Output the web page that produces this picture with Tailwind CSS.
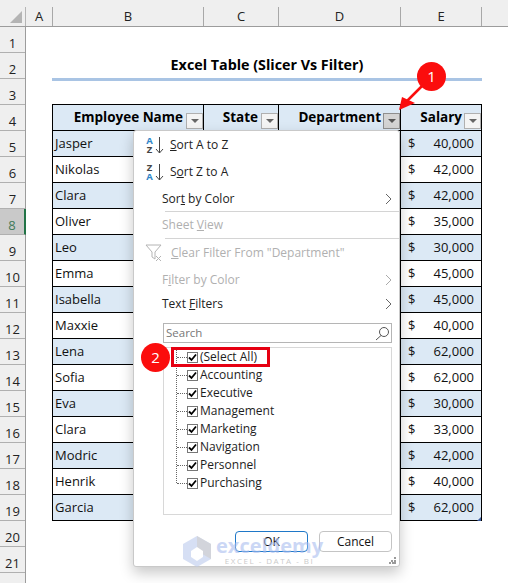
<!DOCTYPE html>
<html lang="en">
<head>
  <meta charset="UTF-8">
  <title>Excel Table (Slicer Vs Filter)</title>
  <script src="https://cdn.jsdelivr.net/npm/@tailwindcss/browser@4"></script>
</head>
<body class="bg-white font-['Open_Sans',sans-serif] text-[13px] text-[#111]">
<div class="relative w-[508px] h-[583px] overflow-hidden">

  <!-- column headers -->
  <div class="flex h-[27px] bg-[#efefef] border-b border-[#9c9c9c] text-[#222] text-[13px]">
    <div class="w-[26px] h-[19px] self-end border-r border-[#b5b5b5] flex items-end justify-end p-[3px]">
      <div class="w-0 h-0 border-l-[12px] border-l-transparent border-b-[12px] border-b-[#b4b4b4]"></div>
    </div>
    <div class="w-[27px] h-[19px] self-end border-r border-[#a8a8a8] flex items-center justify-center">A</div>
    <div class="w-[151px] h-[19px] self-end border-r border-[#a8a8a8] flex items-center justify-center">B</div>
    <div class="w-[75px] h-[19px] self-end border-r border-[#a8a8a8] flex items-center justify-center">C</div>
    <div class="w-[122px] h-[19px] self-end border-r border-[#a8a8a8] flex items-center justify-center">D</div>
    <div class="w-[81px] h-[19px] self-end border-r border-[#a8a8a8] flex items-center justify-center">E</div>
    <div class="flex-1"></div>
  </div>

  <div class="flex">
    <!-- row headers -->
    <div class="w-[26px] shrink-0 bg-[#efefef] border-r border-[#9c9c9c] text-[#222] text-[13px] leading-[18px]">
      <div class="h-[26px] border-b border-[#b0b0b0] flex items-end justify-center">1</div>
      <div class="h-[26px] border-b border-[#b0b0b0] flex items-end justify-center">2</div>
      <div class="h-[26px] border-b border-[#b0b0b0] flex items-end justify-center">3</div>
      <div class="h-[26px] border-b border-[#b0b0b0] flex items-end justify-center">4</div>
      <div class="h-[26px] border-b border-[#b0b0b0] flex items-end justify-center">5</div>
      <div class="h-[26px] border-b border-[#b0b0b0] flex items-end justify-center">6</div>
      <div class="h-[26px] border-b border-[#b0b0b0] flex items-end justify-center">7</div>
      <div class="h-[26px] border-b border-[#b0b0b0] flex items-end justify-center bg-[#c9c9c9] text-[#3f7a58] border-r-2 border-r-[#217346] -mr-px">8</div>
      <div class="h-[26px] border-b border-[#b0b0b0] flex items-end justify-center">9</div>
      <div class="h-[26px] border-b border-[#b0b0b0] flex items-end justify-center">10</div>
      <div class="h-[26px] border-b border-[#b0b0b0] flex items-end justify-center">11</div>
      <div class="h-[26px] border-b border-[#b0b0b0] flex items-end justify-center">12</div>
      <div class="h-[26px] border-b border-[#b0b0b0] flex items-end justify-center">13</div>
      <div class="h-[26px] border-b border-[#b0b0b0] flex items-end justify-center">14</div>
      <div class="h-[26px] border-b border-[#b0b0b0] flex items-end justify-center">15</div>
      <div class="h-[26px] border-b border-[#b0b0b0] flex items-end justify-center">16</div>
      <div class="h-[26px] border-b border-[#b0b0b0] flex items-end justify-center">17</div>
      <div class="h-[26px] border-b border-[#b0b0b0] flex items-end justify-center">18</div>
      <div class="h-[26px] border-b border-[#b0b0b0] flex items-end justify-center">19</div>
      <div class="h-[26px] border-b border-[#b0b0b0] flex items-end justify-center">20</div>
      <div class="h-[26px] border-b border-[#b0b0b0] flex items-end justify-center">21</div>
      <div class="h-[26px]"></div>
    </div>

    <!-- sheet -->
    <div class="pl-[26px]">
      <div class="w-[430px] h-[51px] pt-[25px] text-center font-bold text-[14.300px] leading-[26px] text-black">Excel Table (Slicer Vs Filter)</div>
      <div class="w-[430px] h-[3px] bg-[#a9c4e4]"></div>
      <div class="h-[23px]"></div>

      <div class="relative w-[430px] border-t border-l border-r border-black">
        <!-- table head -->
        <div class="flex h-[26px] bg-[#dce9f5] font-bold text-[13.5px] border-b border-black text-black">
          <div class="w-[151px] border-r border-black flex items-center justify-end gap-[3px]">Employee Name
            <span class="self-end mb-[1px] w-[17px] h-[16px] bg-[#f4f4f4] border border-[#b0b0b0] flex items-center justify-center"><span class="w-0 h-0 border-x-[4px] border-x-transparent border-t-[4px] border-t-[#666]"></span></span>
          </div>
          <div class="w-[75px] border-r border-black flex items-center justify-end gap-[3px]">State
            <span class="self-end mb-[1px] w-[17px] h-[16px] bg-[#f4f4f4] border border-[#b0b0b0] flex items-center justify-center"><span class="w-0 h-0 border-x-[4px] border-x-transparent border-t-[4px] border-t-[#666]"></span></span>
          </div>
          <div class="w-[122px] flex items-center justify-end gap-[2px] border-r border-black">Department
            <span class="self-end mb-[1px] w-[17px] h-[16px] bg-[#d4d4d4] border border-[#8f8f8f] flex items-center justify-center"><span class="w-0 h-0 border-x-[4px] border-x-transparent border-t-[4px] border-t-[#555]"></span></span>
          </div>
          <div class="flex-1 flex items-center justify-end gap-[2px]">Salary
            <span class="self-end mb-[1px] w-[17px] h-[16px] bg-[#f4f4f4] border border-[#b0b0b0] flex items-center justify-center"><span class="w-0 h-0 border-x-[4px] border-x-transparent border-t-[4px] border-t-[#666]"></span></span>
          </div>
        </div>
        <!-- table body: only name and salary show beside the menu -->
        <div class="flex h-[26px] pt-[1px] bg-[#dce9f5] border-b border-black"><div class="w-[151px] pl-[2px] flex items-center">Jasper</div><div class="w-[197px] -mt-[1px] border-r border-black"></div><div class="flex-1 flex items-center justify-between px-[7px]"><span>$</span><span>40,000</span></div></div>
        <div class="flex h-[26px] pt-[1px] border-b border-black"><div class="w-[151px] pl-[2px] flex items-center">Nikolas</div><div class="w-[197px] -mt-[1px] border-r border-black"></div><div class="flex-1 flex items-center justify-between px-[7px]"><span>$</span><span>42,000</span></div></div>
        <div class="flex h-[26px] pt-[1px] bg-[#dce9f5] border-b border-black"><div class="w-[151px] pl-[2px] flex items-center">Clara</div><div class="w-[197px] -mt-[1px] border-r border-black"></div><div class="flex-1 flex items-center justify-between px-[7px]"><span>$</span><span>42,000</span></div></div>
        <div class="flex h-[26px] pt-[1px] border-b border-black"><div class="w-[151px] pl-[2px] flex items-center">Oliver</div><div class="w-[197px] -mt-[1px] border-r border-black"></div><div class="flex-1 flex items-center justify-between px-[7px]"><span>$</span><span>35,000</span></div></div>
        <div class="flex h-[26px] pt-[1px] bg-[#dce9f5] border-b border-black"><div class="w-[151px] pl-[2px] flex items-center">Leo</div><div class="w-[197px] -mt-[1px] border-r border-black"></div><div class="flex-1 flex items-center justify-between px-[7px]"><span>$</span><span>30,000</span></div></div>
        <div class="flex h-[26px] pt-[1px] border-b border-black"><div class="w-[151px] pl-[2px] flex items-center">Emma</div><div class="w-[197px] -mt-[1px] border-r border-black"></div><div class="flex-1 flex items-center justify-between px-[7px]"><span>$</span><span>45,000</span></div></div>
        <div class="flex h-[26px] pt-[1px] bg-[#dce9f5] border-b border-black"><div class="w-[151px] pl-[2px] flex items-center">Isabella</div><div class="w-[197px] -mt-[1px] border-r border-black"></div><div class="flex-1 flex items-center justify-between px-[7px]"><span>$</span><span>45,000</span></div></div>
        <div class="flex h-[26px] pt-[1px] border-b border-black"><div class="w-[151px] pl-[2px] flex items-center">Maxxie</div><div class="w-[197px] -mt-[1px] border-r border-black"></div><div class="flex-1 flex items-center justify-between px-[7px]"><span>$</span><span>40,000</span></div></div>
        <div class="flex h-[26px] pt-[1px] bg-[#dce9f5] border-b border-black"><div class="w-[151px] pl-[2px] flex items-center">Lena</div><div class="w-[197px] -mt-[1px] border-r border-black"></div><div class="flex-1 flex items-center justify-between px-[7px]"><span>$</span><span>62,000</span></div></div>
        <div class="flex h-[26px] pt-[1px] border-b border-black"><div class="w-[151px] pl-[2px] flex items-center">Sofia</div><div class="w-[197px] -mt-[1px] border-r border-black"></div><div class="flex-1 flex items-center justify-between px-[7px]"><span>$</span><span>62,000</span></div></div>
        <div class="flex h-[26px] pt-[1px] bg-[#dce9f5] border-b border-black"><div class="w-[151px] pl-[2px] flex items-center">Eva</div><div class="w-[197px] -mt-[1px] border-r border-black"></div><div class="flex-1 flex items-center justify-between px-[7px]"><span>$</span><span>30,000</span></div></div>
        <div class="flex h-[26px] pt-[1px] border-b border-black"><div class="w-[151px] pl-[2px] flex items-center">Clara</div><div class="w-[197px] -mt-[1px] border-r border-black"></div><div class="flex-1 flex items-center justify-between px-[7px]"><span>$</span><span>33,000</span></div></div>
        <div class="flex h-[26px] pt-[1px] bg-[#dce9f5] border-b border-black"><div class="w-[151px] pl-[2px] flex items-center">Modric</div><div class="w-[197px] -mt-[1px] border-r border-black"></div><div class="flex-1 flex items-center justify-between px-[7px]"><span>$</span><span>42,000</span></div></div>
        <div class="flex h-[26px] pt-[1px] border-b border-black"><div class="w-[151px] pl-[2px] flex items-center">Henrik</div><div class="w-[197px] -mt-[1px] border-r border-black"></div><div class="flex-1 flex items-center justify-between px-[7px]"><span>$</span><span>40,000</span></div></div>
        <div class="flex h-[26px] pt-[1px] bg-[#dce9f5] border-b border-black"><div class="w-[151px] pl-[2px] flex items-center">Garcia</div><div class="w-[197px] -mt-[1px] border-r border-black"></div><div class="flex-1 flex items-center justify-between px-[7px]"><span>$</span><span>62,000</span></div></div>
        <!-- table resize handle -->
        <div class="absolute right-0 bottom-0 w-0 h-0 border-l-[4px] border-l-transparent border-b-[4px] border-b-[#3f5f9f]"></div>
      </div>
    </div>
  </div>

  <!-- filter dropdown -->
  <div class="absolute left-[133px] top-[130px] w-[267px] h-[437px] bg-white border border-[#c9c9c9] rounded-[3px] shadow-[0_6px_14px_rgba(0,0,0,0.22)] text-[12px] text-[#222]">
    <div class="flex items-center h-[27px]">
      <div class="ml-[11px] w-[9px] flex flex-col items-center font-bold text-[9.500px] leading-[9px]"><span class="text-[#2f86c9]">A</span><span class="text-[#444]">Z</span></div>
      <svg class="ml-[1px] w-[9px] h-[18px]" viewBox="0 0 9 18"><path d="M4.500 1v16M1 13l3.500 4 3.500-4" stroke="#444" fill="none"/></svg>
      <span class="ml-[6px]"><u>S</u>ort A to Z</span>
    </div>
    <div class="flex items-center h-[28px]">
      <div class="ml-[11px] w-[9px] flex flex-col items-center font-bold text-[9.500px] leading-[9px]"><span class="text-[#444]">Z</span><span class="text-[#2f86c9]">A</span></div>
      <svg class="ml-[1px] w-[9px] h-[18px]" viewBox="0 0 9 18"><path d="M4.500 1v16M1 13l3.500 4 3.500-4" stroke="#444" fill="none"/></svg>
      <span class="ml-[6px]">S<u>o</u>rt Z to A</span>
    </div>
    <div class="flex items-center justify-between h-[25px] pl-[28px] pr-[7px]"><span>Sor<u>t</u> by Color</span><svg class="w-[7px] h-[12px]" viewBox="0 0 7 12"><path d="M1 1l5 5-5 5" stroke="#666" fill="none"/></svg></div>
    <div class="h-px ml-[31px] bg-[#d4d4d4]"></div>
    <div class="flex items-center h-[26px] pl-[28px] text-[#b0b0b0]"><span>Sheet <u>V</u>iew</span></div>
    <div class="h-px ml-[31px] bg-[#d4d4d4]"></div>
    <div class="flex items-center h-[28px] pl-[11px] text-[#b0b0b0]">
      <svg class="w-[18px] h-[18px]" viewBox="0 0 18 18"><path d="M1 1h15l-6 7v7l-3-2V8z" fill="none" stroke="#b4b4b4"/><path d="M11 12l5 5M16 12l-5 5" stroke="#b4b4b4"/></svg>
      <span class="ml-[8px]"><u>C</u>lear Filter From "Department"</span>
    </div>
    <div class="flex items-center justify-between h-[25px] pl-[28px] pr-[7px] text-[#b0b0b0]"><span>F<u>i</u>lter by Color</span><svg class="w-[7px] h-[12px]" viewBox="0 0 7 12"><path d="M1 1l5 5-5 5" stroke="#aaa" fill="none"/></svg></div>
    <div class="flex items-center justify-between h-[23px] pl-[28px] pr-[7px]"><span>Text <u>F</u>ilters</span><svg class="w-[7px] h-[12px]" viewBox="0 0 7 12"><path d="M1 1l5 5-5 5" stroke="#666" fill="none"/></svg></div>

    <div class="ml-[29px] mr-[7px] mt-[8px] h-[20px] border border-[#b5b5b5] flex items-center justify-between pl-[2px] pr-[1px] text-[#777] text-[11.5px]">
      <span>Search</span>
      <svg class="w-[15px] h-[15px]" viewBox="0 0 15 15"><circle cx="9" cy="6" r="4.500" fill="none" stroke="#555"/><path d="M6 9.500L1 14" stroke="#555"/></svg>
    </div>

    <div class="ml-[29px] mr-[7px] mt-[4px] h-[168px] border border-[#d8d8d8] pl-[12px] text-[#1d1d1d]">
      <div class="h-[135px] border-l border-dotted border-[#666]">
        <div class="flex items-center h-[18px]"><span class="w-[10px] border-t border-dotted border-[#666]"></span><span class="w-[11px] h-[11px] border border-[#777] flex items-center justify-center"><svg class="w-[9px] h-[9px]" viewBox="0 0 9 9"><path d="M1 4.500l2.500 2.500L8 1.500" stroke="#000" stroke-width="1.800" fill="none"/></svg></span><span class="ml-[2px]">(Select All)</span></div>
        <div class="flex items-center h-[18px]"><span class="w-[10px] border-t border-dotted border-[#666]"></span><span class="w-[11px] h-[11px] border border-[#777] flex items-center justify-center"><svg class="w-[9px] h-[9px]" viewBox="0 0 9 9"><path d="M1 4.500l2.500 2.500L8 1.500" stroke="#000" stroke-width="1.800" fill="none"/></svg></span><span class="ml-[2px]">Accounting</span></div>
        <div class="flex items-center h-[18px]"><span class="w-[10px] border-t border-dotted border-[#666]"></span><span class="w-[11px] h-[11px] border border-[#777] flex items-center justify-center"><svg class="w-[9px] h-[9px]" viewBox="0 0 9 9"><path d="M1 4.500l2.500 2.500L8 1.500" stroke="#000" stroke-width="1.800" fill="none"/></svg></span><span class="ml-[2px]">Executive</span></div>
        <div class="flex items-center h-[18px]"><span class="w-[10px] border-t border-dotted border-[#666]"></span><span class="w-[11px] h-[11px] border border-[#777] flex items-center justify-center"><svg class="w-[9px] h-[9px]" viewBox="0 0 9 9"><path d="M1 4.500l2.500 2.500L8 1.500" stroke="#000" stroke-width="1.800" fill="none"/></svg></span><span class="ml-[2px]">Management</span></div>
        <div class="flex items-center h-[18px]"><span class="w-[10px] border-t border-dotted border-[#666]"></span><span class="w-[11px] h-[11px] border border-[#777] flex items-center justify-center"><svg class="w-[9px] h-[9px]" viewBox="0 0 9 9"><path d="M1 4.500l2.500 2.500L8 1.500" stroke="#000" stroke-width="1.800" fill="none"/></svg></span><span class="ml-[2px]">Marketing</span></div>
        <div class="flex items-center h-[18px]"><span class="w-[10px] border-t border-dotted border-[#666]"></span><span class="w-[11px] h-[11px] border border-[#777] flex items-center justify-center"><svg class="w-[9px] h-[9px]" viewBox="0 0 9 9"><path d="M1 4.500l2.500 2.500L8 1.500" stroke="#000" stroke-width="1.800" fill="none"/></svg></span><span class="ml-[2px]">Navigation</span></div>
        <div class="flex items-center h-[18px]"><span class="w-[10px] border-t border-dotted border-[#666]"></span><span class="w-[11px] h-[11px] border border-[#777] flex items-center justify-center"><svg class="w-[9px] h-[9px]" viewBox="0 0 9 9"><path d="M1 4.500l2.500 2.500L8 1.500" stroke="#000" stroke-width="1.800" fill="none"/></svg></span><span class="ml-[2px]">Personnel</span></div>
        <div class="flex items-center h-[18px]"><span class="w-[10px] border-t border-dotted border-[#666]"></span><span class="w-[11px] h-[11px] border border-[#777] flex items-center justify-center"><svg class="w-[9px] h-[9px]" viewBox="0 0 9 9"><path d="M1 4.500l2.500 2.500L8 1.500" stroke="#000" stroke-width="1.800" fill="none"/></svg></span><span class="ml-[2px]">Purchasing</span></div>
      </div>
    </div>

    <div class="flex justify-end gap-[11px] mr-[7px] mt-[16px] text-[#111]">
      <div class="w-[73px] h-[21px] border border-[#1f78c8] rounded-[4px] flex items-center justify-center">OK</div>
      <div class="w-[73px] h-[21px] border border-[#c4c4c4] rounded-[4px] flex items-center justify-center">Cancel</div>
    </div>

    <!-- resize grip -->
    <svg class="absolute right-[3px] bottom-[2px] w-[7px] h-[7px]" viewBox="0 0 7 7"><path d="M5 0h2v2H5zM2 3h2v2H2zM5 3h2v2H5zM0 5h2v2H0zM3 5h2v2H3zM5 5h2v2H5z" fill="#9a9a9a"/></svg>
  </div>

  <!-- watermark -->
  <div class="absolute left-[183px] top-[536px] flex items-center gap-[5px] pointer-events-none opacity-60">
    <svg class="w-[28px] h-[31px]" viewBox="0 0 28 31"><path d="M14 0l14 8v15l-14 8-14-8V8z" fill="#bccbee"/><path d="M14 0l14 8v15L14 15z" fill="#b5b9c4"/><path d="M14 11l6 4v6l-6 4-6-4v-6z" fill="#fff"/></svg>
    <div class="flex flex-col items-center -mt-[3px]">
      <span class="text-[20px] leading-[20px] font-bold text-[#a9bdf0]">exceldemy</span>
      <span class="text-[8px] leading-[9px] tracking-[1.500px] text-[#a8a8a8]">EXCEL - DATA - BI</span>
    </div>
  </div>

  <!-- callouts -->
  <svg class="absolute left-0 top-0 w-[508px] h-[583px] pointer-events-none" viewBox="0 0 508 583">
    <path d="M422 86L406 102" stroke="#fb0d0d" stroke-width="2.500"/>
    <path d="M399 110l3-13 13 6z" fill="#fb0d0d"/>
  </svg>
  <div class="absolute left-[417px] top-[62px] w-[29px] h-[29px] rounded-full bg-[#fb0d0d] text-white text-[15px] flex items-center justify-center">1</div>
  <div class="absolute left-[141px] top-[343px] w-[29px] h-[29px] rounded-full bg-[#fb0d0d] text-white text-[15px] flex items-center justify-center">2</div>
  <div class="absolute left-[171px] top-[347px] w-[99px] h-[20px] border-[3px] border-[#e60012]"></div>
</div>
</body>
</html>
